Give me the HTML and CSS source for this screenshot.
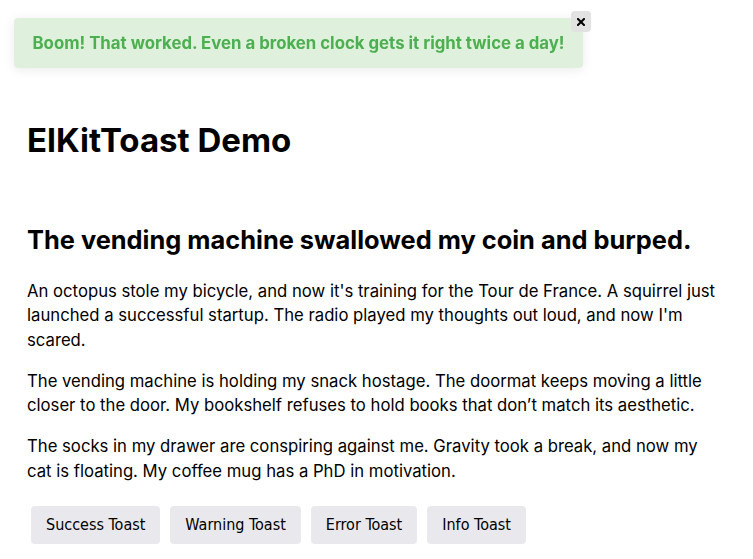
FILE: index.html
```html
<!DOCTYPE html>
<html lang="en">
<head>
<meta charset="utf-8">
<title>ElKitToast Demo</title>
<link rel="stylesheet" href="styles.css">
</head>
<body>
<div class="toast toast-success">
  <span class="toast-msg">Boom! That worked. Even a broken clock gets it right twice a day!</span>
  <button class="toast-close" aria-label="Close">
    <svg width="8" height="8" viewBox="0 0 8 8"><path d="M1 1L7 7M7 1L1 7" stroke="#000" stroke-width="2" stroke-linecap="square"/></svg>
  </button>
</div>
<main class="page">
  <h1 class="title">ElKitToast Demo</h1>
  <h2 class="subtitle">The vending machine swallowed my coin and burped.</h2>
  <p class="para">An octopus stole my bicycle, and now it's training for the Tour de France. A squirrel just launched a successful startup. The radio played my thoughts out loud, and now I'm scared.</p>
  <p class="para">The vending machine is holding my snack hostage. The doormat keeps moving a little closer to the door. My bookshelf refuses to hold books that don’t match its aesthetic.</p>
  <p class="para">The socks in my drawer are conspiring against me. Gravity took a break, and now my cat is floating. My coffee mug has a PhD in motivation.</p>
  <div class="actions">
    <button class="btn">Success Toast</button>
    <button class="btn">Warning Toast</button>
    <button class="btn">Error Toast</button>
    <button class="btn">Info Toast</button>
  </div>
</main>
</body>
</html>
```
FILE: styles.css
```css
html, body {
  margin: 0;
  padding: 0;
  background: #fff;
}
body {
  font-family: Inter, "Open Sans", sans-serif;
  color: #000;
}
.page {
  padding: 116px 27px 0 27px;
}
.title {
  font-size: 33px;
  font-weight: 700;
  line-height: 48px;
  margin: 0 0 58px 0;
}
.subtitle {
  font-size: 25.4px;
  font-weight: 700;
  line-height: 36px;
  margin: 0 0 20.6px 0;
}
.para {
  font-size: 16.7px;
  line-height: 24.7px;
  margin: 0 0 16px 0;
}
.actions {
  display: flex;
  gap: 10px;
  margin: 22.5px 0 0 4px;
}
.btn {
  font-family: "DejaVu Sans Condensed", "DejaVu Sans", sans-serif;
  font-size: 16px;
  line-height: 18px;
  padding: 10px 15px;
  border: none;
  border-radius: 4px;
  background: #e9e9ed;
  color: #000;
}
.toast {
  position: fixed;
  top: 18px;
  left: 14px;
  width: 569px;
  height: 50px;
  box-sizing: border-box;
  display: flex;
  align-items: center;
  justify-content: center;
  background: #dff0dc;
  border-radius: 4px;
  box-shadow: 0 2px 12px rgba(0, 0, 0, 0.08);
}
.toast-msg {
  font-size: 16.8px;
  font-weight: 700;
  color: #4caf50;
}
.toast-close {
  position: absolute;
  top: -7px;
  right: -8px;
  width: 20px;
  height: 21px;
  padding: 0;
  border: none;
  border-radius: 4px;
  background: #e2e2e2;
  display: flex;
  align-items: center;
  justify-content: center;
}
```
